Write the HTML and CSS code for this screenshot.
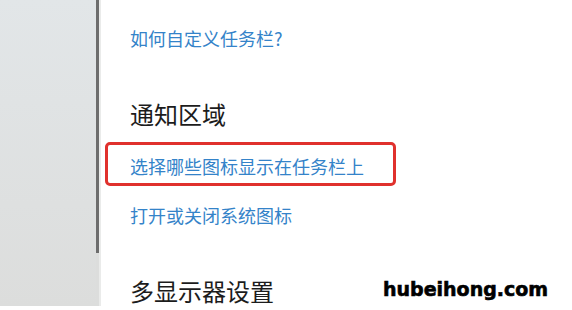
FILE: index.html
```html
<!DOCTYPE html>
<html lang="zh-CN">
<head>
<meta charset="utf-8">
<link rel="stylesheet" href="styles.css">
</head>
<body>
<div class="page">
  <aside class="sidebar">
    <div class="sidebar-fill"></div>
    <div class="scroll-track"><div class="scroll-thumb"></div></div>
    <div class="sidebar-edge"></div>
  </aside>
  <main class="content">
    <a class="link first">如何自定义任务栏?</a>
    <h2 class="heading notif">通知区域</h2>
    <div class="highlight"><a class="link">选择哪些图标显示在任务栏上</a></div>
    <a class="link third">打开或关闭系统图标</a>
    <h2 class="heading multi">多显示器设置</h2>
  </main>
  <div class="watermark">hubeihong.com</div>
</div>
</body>
</html>
```

FILE: styles.css
```css
html, body {
  margin: 0;
  padding: 0;
  background: #ffffff;
}
body {
  width: 572px;
  height: 310px;
  overflow: hidden;
  font-family: "Noto Sans CJK SC", "Noto Sans", sans-serif;
}
.page {
  position: relative;
  display: flex;
  width: 572px;
  height: 310px;
}
.sidebar {
  display: flex;
  height: 306px;
  flex: 0 0 auto;
}
.sidebar-fill {
  width: 96px;
  background: linear-gradient(#e2e6e8, #dcdddc);
}
.scroll-track {
  width: 3px;
  background: #dcdddc;
}
.scroll-thumb {
  height: 253px;
  background: #6d6d6d;
}
.sidebar-edge {
  width: 2px;
  background: #eaebea;
}
.content {
  display: flex;
  flex-direction: column;
  align-items: flex-start;
  padding: 26px 0 0 29px;
}
.link {
  display: block;
  font-size: 18px;
  line-height: 24px;
  color: #3483c9;
  text-decoration: none;
  white-space: nowrap;
}
.heading {
  margin: 0;
  font-size: 24px;
  line-height: 32px;
  font-weight: 400;
  color: #1c1c1c;
  white-space: nowrap;
}
.notif {
  margin-top: 48px;
}
.highlight {
  margin: 12px 0 0 -25px;
  width: 263px;
  padding: 9px 0 5px 22px;
  border: 3px solid #e0312d;
  border-radius: 5px;
}
.third {
  margin-top: 17px;
}
.multi {
  margin-top: 48px;
}
.watermark {
  position: absolute;
  left: 383px;
  top: 280px;
  font-family: "DejaVu Sans", sans-serif;
  font-weight: 700;
  font-size: 19px;
  line-height: 19px;
  color: #000000;
  -webkit-text-stroke: 0.6px #000000;
  white-space: nowrap;
}
```
